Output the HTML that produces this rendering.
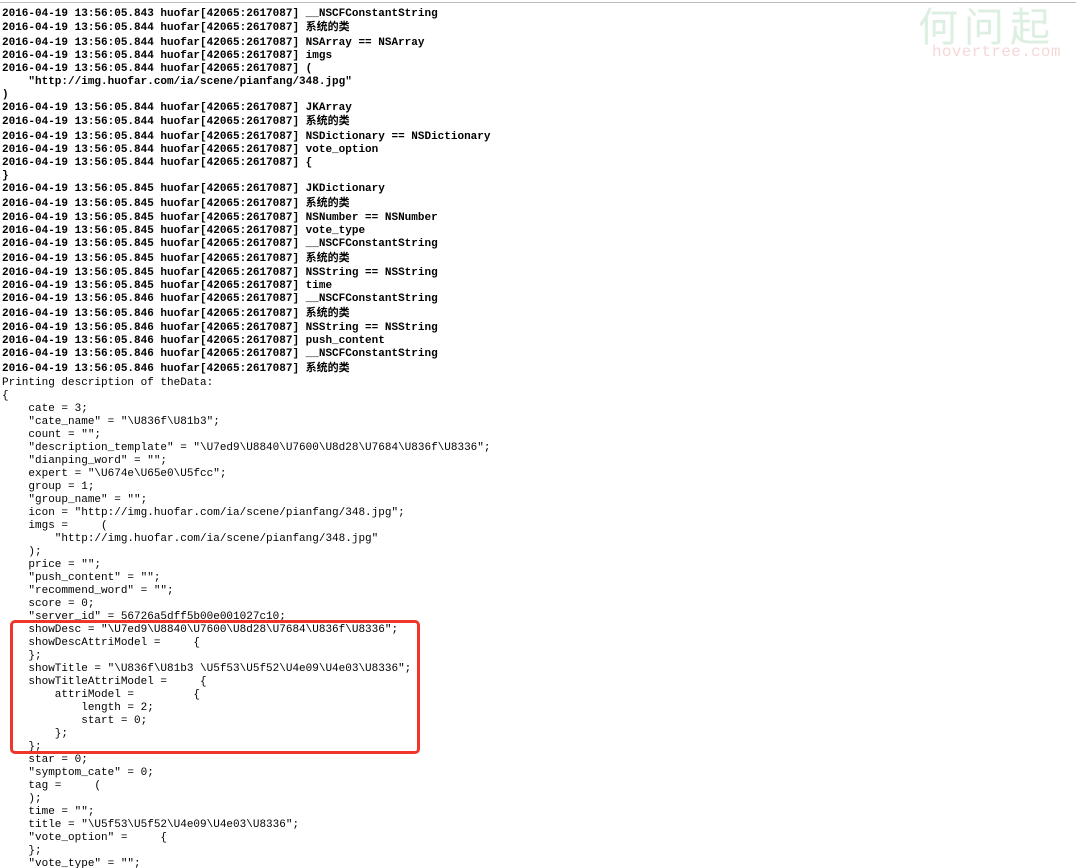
<!DOCTYPE html>
<html><head><meta charset="utf-8"><style>
html,body{margin:0;padding:0;background:#fff;width:1076px;height:868px;overflow:hidden;position:relative}
.l{position:absolute;left:2px;white-space:pre;font-family:"Liberation Mono","Noto Sans CJK SC",monospace;font-size:11px;line-height:14px;color:#000;margin-top:2px}
.b{font-weight:bold}
.topline{position:absolute;left:0;top:2px;width:1076px;height:1px;background:#bbb}
.box{position:absolute;left:10px;top:620px;width:404px;height:128px;border:3px solid #f0362a;border-radius:5px}
.wm1{position:absolute;left:918px;top:0px;font-family:"Noto Sans CJK SC",sans-serif;font-size:40px;color:#dcefe0;letter-spacing:6px;line-height:48px}
.wm2{position:absolute;left:932px;top:43px;font-family:"Liberation Mono",monospace;font-size:16px;color:#f6d8d8;line-height:18px;letter-spacing:0.3px}
</style></head><body>
<div class="topline"></div>
<div class="wm1">何问起</div>
<div class="wm2">hovertree.com</div>
<div class="l b" style="top:5px">2016-04-19 13:56:05.843 huofar[42065:2617087] __NSCFConstantString</div>
<div class="l b" style="top:19px">2016-04-19 13:56:05.844 huofar[42065:2617087] 系统的类</div>
<div class="l b" style="top:34px">2016-04-19 13:56:05.844 huofar[42065:2617087] NSArray == NSArray</div>
<div class="l b" style="top:47px">2016-04-19 13:56:05.844 huofar[42065:2617087] imgs</div>
<div class="l b" style="top:60px">2016-04-19 13:56:05.844 huofar[42065:2617087] (</div>
<div class="l b" style="top:73px">    "http://img.huofar.com/ia/scene/pianfang/348.jpg"</div>
<div class="l b" style="top:86px">)</div>
<div class="l b" style="top:99px">2016-04-19 13:56:05.844 huofar[42065:2617087] JKArray</div>
<div class="l b" style="top:113px">2016-04-19 13:56:05.844 huofar[42065:2617087] 系统的类</div>
<div class="l b" style="top:128px">2016-04-19 13:56:05.844 huofar[42065:2617087] NSDictionary == NSDictionary</div>
<div class="l b" style="top:141px">2016-04-19 13:56:05.844 huofar[42065:2617087] vote_option</div>
<div class="l b" style="top:154px">2016-04-19 13:56:05.844 huofar[42065:2617087] {</div>
<div class="l b" style="top:167px">}</div>
<div class="l b" style="top:180px">2016-04-19 13:56:05.845 huofar[42065:2617087] JKDictionary</div>
<div class="l b" style="top:195px">2016-04-19 13:56:05.845 huofar[42065:2617087] 系统的类</div>
<div class="l b" style="top:209px">2016-04-19 13:56:05.845 huofar[42065:2617087] NSNumber == NSNumber</div>
<div class="l b" style="top:222px">2016-04-19 13:56:05.845 huofar[42065:2617087] vote_type</div>
<div class="l b" style="top:235px">2016-04-19 13:56:05.845 huofar[42065:2617087] __NSCFConstantString</div>
<div class="l b" style="top:250px">2016-04-19 13:56:05.845 huofar[42065:2617087] 系统的类</div>
<div class="l b" style="top:264px">2016-04-19 13:56:05.845 huofar[42065:2617087] NSString == NSString</div>
<div class="l b" style="top:277px">2016-04-19 13:56:05.845 huofar[42065:2617087] time</div>
<div class="l b" style="top:290px">2016-04-19 13:56:05.846 huofar[42065:2617087] __NSCFConstantString</div>
<div class="l b" style="top:305px">2016-04-19 13:56:05.846 huofar[42065:2617087] 系统的类</div>
<div class="l b" style="top:319px">2016-04-19 13:56:05.846 huofar[42065:2617087] NSString == NSString</div>
<div class="l b" style="top:332px">2016-04-19 13:56:05.846 huofar[42065:2617087] push_content</div>
<div class="l b" style="top:345px">2016-04-19 13:56:05.846 huofar[42065:2617087] __NSCFConstantString</div>
<div class="l b" style="top:360px">2016-04-19 13:56:05.846 huofar[42065:2617087] 系统的类</div>
<div class="l" style="top:374px">Printing description of theData:</div>
<div class="l" style="top:387px">{</div>
<div class="l" style="top:400px">    cate = 3;</div>
<div class="l" style="top:413px">    "cate_name" = "\U836f\U81b3";</div>
<div class="l" style="top:426px">    count = "";</div>
<div class="l" style="top:439px">    "description_template" = "\U7ed9\U8840\U7600\U8d28\U7684\U836f\U8336";</div>
<div class="l" style="top:452px">    "dianping_word" = "";</div>
<div class="l" style="top:465px">    expert = "\U674e\U65e0\U5fcc";</div>
<div class="l" style="top:478px">    group = 1;</div>
<div class="l" style="top:491px">    "group_name" = "";</div>
<div class="l" style="top:504px">    icon = "http://img.huofar.com/ia/scene/pianfang/348.jpg";</div>
<div class="l" style="top:517px">    imgs =     (</div>
<div class="l" style="top:530px">        "http://img.huofar.com/ia/scene/pianfang/348.jpg"</div>
<div class="l" style="top:543px">    );</div>
<div class="l" style="top:556px">    price = "";</div>
<div class="l" style="top:569px">    "push_content" = "";</div>
<div class="l" style="top:582px">    "recommend_word" = "";</div>
<div class="l" style="top:595px">    score = 0;</div>
<div class="l" style="top:608px">    "server_id" = 56726a5dff5b00e001027c10;</div>
<div class="l" style="top:621px">    showDesc = "\U7ed9\U8840\U7600\U8d28\U7684\U836f\U8336";</div>
<div class="l" style="top:634px">    showDescAttriModel =     {</div>
<div class="l" style="top:647px">    };</div>
<div class="l" style="top:660px">    showTitle = "\U836f\U81b3 \U5f53\U5f52\U4e09\U4e03\U8336";</div>
<div class="l" style="top:673px">    showTitleAttriModel =     {</div>
<div class="l" style="top:686px">        attriModel =         {</div>
<div class="l" style="top:699px">            length = 2;</div>
<div class="l" style="top:712px">            start = 0;</div>
<div class="l" style="top:725px">        };</div>
<div class="l" style="top:738px">    };</div>
<div class="l" style="top:751px">    star = 0;</div>
<div class="l" style="top:764px">    "symptom_cate" = 0;</div>
<div class="l" style="top:777px">    tag =     (</div>
<div class="l" style="top:790px">    );</div>
<div class="l" style="top:803px">    time = "";</div>
<div class="l" style="top:816px">    title = "\U5f53\U5f52\U4e09\U4e03\U8336";</div>
<div class="l" style="top:829px">    "vote_option" =     {</div>
<div class="l" style="top:842px">    };</div>
<div class="l" style="top:855px">    "vote_type" = "";</div>
<div class="box"></div>
</body></html>
